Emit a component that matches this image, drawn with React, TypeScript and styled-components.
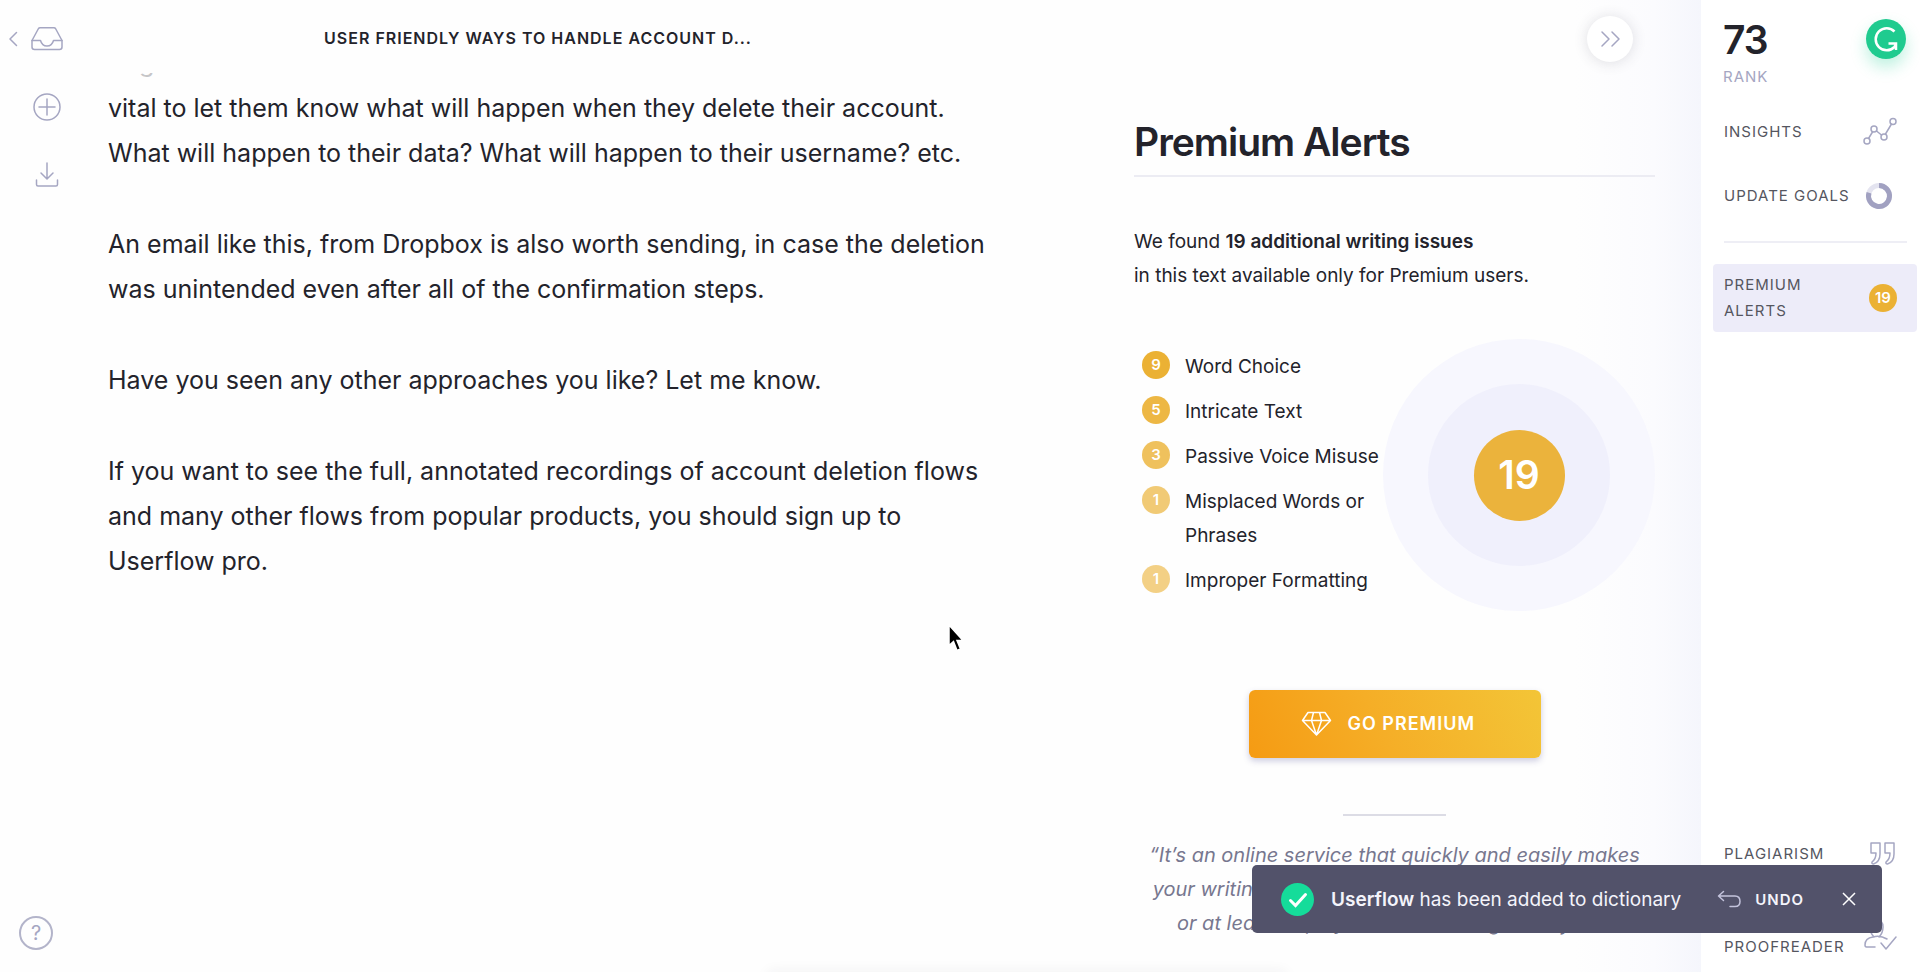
import React from "react";
import styled, { createGlobalStyle } from "styled-components";

const ink = "#23232b";
const slate = "#55565f";
const muted = "#a5a6c2";
const amber = "#ebb33c";

const GlobalStyle = createGlobalStyle`
  *, *::before, *::after { box-sizing: border-box; }
  body {
    margin: 0;
    background: #fefefe;
    color: ${ink};
    font-family: Inter, "Liberation Sans", sans-serif;
  }
  h1, h2, p, ul { margin: 0; padding: 0; }
  ul { list-style: none; }
  strong { font-weight: 600; }
  button { border: 0; padding: 0; background: none; color: inherit; font: inherit; cursor: pointer; }
  a { color: inherit; text-decoration: none; }
  svg { display: block; flex: none; }
`;

const Page = styled.div`
  display: grid;
  grid-template-columns: 94px minmax(0, 1fr) 587px 219px;
  height: 100vh;
  overflow: hidden;
`;

const Rail = styled.nav`
  display: flex;
  flex-direction: column;
  align-items: flex-start;
  justify-content: space-between;
  padding: 22px 0 22px 8px;
`;

const RailGroup = styled.div`
  display: flex;
  flex-direction: column;
  align-items: flex-end;
  gap: 34px;
`;

const RailLink = styled.a`
  display: flex;
  align-items: center;
  gap: 12px;
`;

const IconButton = styled.button`
  display: flex;
  align-items: center;
  justify-content: center;
  width: 34px;
  height: 34px;
`;

const HelpButton = styled.button`
  width: 34px;
  height: 34px;
  margin-left: 11px;
  border: 2px solid #b3b4ca;
  border-radius: 50%;
  color: ${muted};
  font-size: 20px;
  line-height: 30px;
`;

const Editor = styled.main`
  max-width: 888px;
`;

const TopBar = styled.header`
  display: flex;
  align-items: center;
  justify-content: center;
  height: 73px;
  padding-top: 3px;
`;

const DocTitle = styled.h1`
  font-size: 16px;
  line-height: 24px;
  font-weight: 600;
  letter-spacing: 1px;
  text-transform: uppercase;
`;

/* The last line scrolled under the top bar: only its descenders show. */
const ScrolledLine = styled.div`
  display: flex;
  align-items: flex-end;
  height: 5px;
  padding-left: 45px;
  overflow: hidden;
  font-size: 25px;
  line-height: 30px;
  opacity: 0.25;
`;

const Article = styled.article`
  display: flex;
  flex-direction: column;
  gap: 46px;
  padding: 8px 0 0 14px;
  font-size: 25px;
  line-height: 45px;
  white-space: nowrap;
`;

const Panel = styled.section`
  background: linear-gradient(to right, rgba(246, 247, 253, 0) 460px, #fbfbfe 540px, #f5f6fc 100%);
`;

const PanelBar = styled.div`
  display: flex;
  align-items: center;
  justify-content: flex-end;
  height: 78px;
  padding-right: 68px;
`;

const CollapseButton = styled(IconButton)`
  width: 46px;
  height: 46px;
  border-radius: 50%;
  background: #fff;
  box-shadow: 0 1px 14px rgba(60, 60, 80, 0.16);
`;

const PanelBody = styled.div`
  display: flex;
  flex-direction: column;
  padding: 36px 46px 0 20px;
  font-size: 19px;
  line-height: 34px;
`;

const PanelTitle = styled.h2`
  padding-bottom: 6px;
  border-bottom: 2px solid #ececf3;
  font-size: 39px;
  line-height: 55px;
  font-weight: 600;
  letter-spacing: -1px;
`;

const Summary = styled.p`
  margin-top: 48px;
`;

const Breakdown = styled.div`
  display: flex;
  justify-content: space-between;
  margin-top: 46px;
`;

const IssueList = styled.ul`
  display: flex;
  flex-direction: column;
  gap: 11px;
  padding: 11px 0 0 8px;
  white-space: nowrap;
`;

const Issue = styled.li`
  display: flex;
  gap: 15px;
`;

const Count = styled.span<{ $strength?: number }>`
  flex: none;
  width: 28px;
  height: 28px;
  border-radius: 50%;
  background: rgba(235, 177, 52, ${(p) => p.$strength ?? 1});
  color: #fff;
  font-size: 15px;
  line-height: 28px;
  font-weight: 600;
  text-align: center;
  letter-spacing: 0;
`;

const IssueCount = styled(Count)`
  margin-top: 1px;
`;

const Ring = styled.div<{ $size: number; $fill: string }>`
  display: flex;
  flex: none;
  align-items: center;
  justify-content: center;
  width: ${(p) => p.$size}px;
  height: ${(p) => p.$size}px;
  border-radius: 50%;
  background: ${(p) => p.$fill};
  color: #fff;
  font-size: 39px;
  font-weight: 600;
`;

const PremiumButton = styled.button`
  display: flex;
  align-items: center;
  align-self: center;
  gap: 16px;
  width: 292px;
  height: 68px;
  margin-top: 79px;
  padding-left: 52px;
  border-radius: 6px;
  background: linear-gradient(65deg, #f59b13 0%, #f5ae27 45%, #f3c537 100%);
  box-shadow: 0 3px 6px rgba(60, 60, 140, 0.25);
  color: #fff;
  font-size: 18px;
  font-weight: 600;
  letter-spacing: 1px;
`;

const ShortRule = styled.hr`
  width: 103px;
  margin: 56px auto 0;
  border: 0;
  border-top: 2px solid #dcdce5;
`;

const Quote = styled.p`
  margin-top: 22px;
  color: #77778f;
  font-size: 20px;
  font-style: italic;
  text-align: center;
  white-space: nowrap;
`;

const Sidebar = styled.aside`
  display: flex;
  flex-direction: column;
  padding: 19px 3px 0 12px;
  background: #fff;
`;

const ScoreRow = styled.div`
  display: flex;
  justify-content: space-between;
  padding: 0 11px 0 10px;
`;

const Score = styled.div`
  font-size: 39px;
  line-height: 41px;
  font-weight: 600;
  letter-spacing: -1px;
`;

const ScoreLabel = styled.div`
  color: ${muted};
  font-size: 15px;
  line-height: 34px;
  letter-spacing: 1px;
`;

const Logo = styled.a`
  width: 40px;
  height: 40px;
  border-radius: 50%;
  box-shadow: 0 8px 16px rgba(21, 205, 145, 0.28);
`;

const SideLink = styled.a<{ $active?: boolean }>`
  display: flex;
  align-items: center;
  justify-content: space-between;
  min-height: ${(p) => (p.$active ? 68 : 64)}px;
  padding: 0 20px 0 11px;
  border-radius: 4px;
  background: ${(p) => (p.$active ? "#edecf9" : "transparent")};
  color: ${slate};
  font-size: 15px;
  line-height: 26px;
  letter-spacing: 1px;
  white-space: nowrap;
`;

const TopLinks = styled.nav`
  padding-top: 6px;
`;

const Divider = styled.hr`
  width: calc(100% - 21px);
  margin: 13px 10px 21px 11px;
  border: 0;
  border-top: 2px solid #eeeef5;
`;

const BottomLinks = styled.nav`
  display: flex;
  flex-direction: column;
  gap: 16px;
  margin-top: auto;
  padding-bottom: 6px;
`;

const Proofreader = styled.span`
  padding-top: 26px;
`;

const Toast = styled.div`
  position: fixed;
  right: 38px;
  bottom: 39px;
  display: flex;
  align-items: center;
  width: 630px;
  height: 68px;
  padding: 0 24px 0 29px;
  border-radius: 5px;
  background: #52526a;
  color: #f4f4fb;
  font-size: 19px;
  white-space: nowrap;
`;

const ToastText = styled.span`
  flex: 1;
  margin-left: 17px;
`;

const UndoButton = styled.button`
  display: flex;
  align-items: center;
  gap: 14px;
  margin-right: 36px;
  font-size: 15px;
  font-weight: 600;
  letter-spacing: 1px;
`;

const HiddenBarShadow = styled.div`
  position: fixed;
  left: 40%;
  right: 33%;
  bottom: -10px;
  height: 10px;
  box-shadow: 0 0 14px rgba(40, 40, 60, 0.07);
`;

const Pointer = styled.svg`
  position: fixed;
  left: 947px;
  top: 623px;
`;

const line = { fill: "none", stroke: muted, strokeWidth: 1.5, strokeLinejoin: "round", strokeLinecap: "round" } as const;

const issues = [
  { count: 9, strength: 1, label: "Word Choice" },
  { count: 5, strength: 0.92, label: "Intricate Text" },
  { count: 3, strength: 0.8, label: "Passive Voice Misuse" },
  { count: 1, strength: 0.68, label: <>Misplaced Words or<br />Phrases</> },
  { count: 1, strength: 0.6, label: "Improper Formatting" },
];

export default function App() {
  return (
    <>
      <GlobalStyle />
      <Page>
        <Rail>
          <RailGroup>
            <RailLink href="#documents" aria-label="Back to documents">
              <svg width="10" height="16" {...line}><path d="M8.500 1.500 L2 8 L8.500 14.500" /></svg>
              <svg width="34" height="34" {...line}>
                <path d="M2 18.500 L8.500 6.500 Q9 5.800 10 5.800 H24 Q25 5.800 25.500 6.500 L32 18.500 V25 Q32 27.500 29.500 27.500 H4.500 Q2 27.500 2 25 Z" />
                <path d="M2 18.500 H10.500 Q12 24 17 24 Q22 24 23.500 18.500 H32" />
              </svg>
            </RailLink>
            <IconButton aria-label="New document">
              <svg width="30" height="30" {...line}><circle cx="15" cy="15" r="13" /><path d="M15 7 V23 M7 15 H23" /></svg>
            </IconButton>
            <IconButton aria-label="Download">
              <svg width="24" height="28" {...line}><path d="M12 2 V17.500 M6 12 L12 18 L18 12 M1.500 19 V23.500 Q1.500 25 3 25 H21 Q22.500 25 22.500 23.500 V19" /></svg>
            </IconButton>
          </RailGroup>
          <HelpButton aria-label="Help">?</HelpButton>
        </Rail>

        <Editor>
          <TopBar>
            <DocTitle>User friendly ways to handle account d...</DocTitle>
          </TopBar>
          <ScrolledLine>g</ScrolledLine>
          <Article>
            <p>
              vital to let them know what will happen when they delete their account.<br />
              What will happen to their data? What will happen to their username? etc.
            </p>
            <p>
              An email like this, from Dropbox is also worth sending, in case the deletion<br />
              was unintended even after all of the confirmation steps.
            </p>
            <p>Have you seen any other approaches you like? Let me know.</p>
            <p>
              If you want to see the full, annotated recordings of account deletion flows<br />
              and many other flows from popular products, you should sign up to<br />
              Userflow pro.
            </p>
          </Article>
        </Editor>

        <Panel>
          <PanelBar>
            <CollapseButton aria-label="Collapse panel">
              <svg width="22" height="18" {...line}><path d="M3 2 L10 9 L3 16 M13 2 L20 9 L13 16" /></svg>
            </CollapseButton>
          </PanelBar>
          <PanelBody>
            <PanelTitle>Premium Alerts</PanelTitle>
            <Summary>
              We found <strong>19 additional writing issues</strong><br />
              in this text available only for Premium users.
            </Summary>
            <Breakdown>
              <IssueList>
                {issues.map((issue, i) => (
                  <Issue key={i}>
                    <IssueCount $strength={issue.strength}>{issue.count}</IssueCount>
                    <span>{issue.label}</span>
                  </Issue>
                ))}
              </IssueList>
              <Ring $size={272} $fill="#f7f7fe">
                <Ring $size={182} $fill="#f0f0fc">
                  <Ring $size={91} $fill={amber}>19</Ring>
                </Ring>
              </Ring>
            </Breakdown>
            <PremiumButton>
              <svg width="31" height="26" fill="none" stroke="#fff" strokeWidth="1.5" strokeLinejoin="round">
                <path d="M7 1.500 H24 L29.500 9.500 L15.500 24 L1.500 9.500 Z M1.500 9.500 H29.500 M12.500 1.500 L10.500 9.500 L15.500 24 L20.500 9.500 L18.500 1.500" />
              </svg>
              GO PREMIUM
            </PremiumButton>
            <ShortRule />
            <Quote>
              “It’s an online service that quickly and easily makes<br />
              your writing sound like you’re a professional writer,<br />
              or at least helps you avoid looking like a fool.”
            </Quote>
          </PanelBody>
        </Panel>

        <Sidebar>
          <ScoreRow>
            <div>
              <Score>73</Score>
              <ScoreLabel>RANK</ScoreLabel>
            </div>
            <Logo href="#home" aria-label="Home">
              <svg width="40" height="40" fill="none">
                <circle cx="20" cy="20" r="20" fill="#1fcb8f" />
                <path d="M28.500 12.500 A11 11 0 1 0 28.500 28 L30 24.500" stroke="#fff" strokeWidth="2.500" />
                <path d="M22.500 24.500 H30 V31" stroke="#fff" strokeWidth="2.500" />
              </svg>
            </Logo>
          </ScoreRow>
          <TopLinks>
            <SideLink href="#insights">
              INSIGHTS
              <svg width="34" height="30" {...line}>
                <path d="M5.500 21.500 L9.500 15 M13.500 14 L18.500 18 M22.500 17 L28.500 7" />
                <circle cx="4" cy="24" r="3" /><circle cx="11" cy="12" r="3" />
                <circle cx="21" cy="20" r="3" /><circle cx="30" cy="4.500" r="3" />
              </svg>
            </SideLink>
            <SideLink href="#goals">
              UPDATE GOALS
              <svg width="34" height="28" fill="none">
                <circle cx="16" cy="14" r="10.500" stroke="#e4e4f0" strokeWidth="5" />
                <path d="M16 3.500 A10.500 10.500 0 1 1 6 10.800" stroke="#a1a1c1" strokeWidth="5" />
              </svg>
            </SideLink>
          </TopLinks>
          <Divider />
          <SideLink href="#alerts" $active>
            <span>PREMIUM<br />ALERTS</span>
            <Count>19</Count>
          </SideLink>
          <BottomLinks>
            <SideLink href="#plagiarism">
              PLAGIARISM
              <svg width="28" height="26" {...line}>
                <path d="M2 2 H11 V13 Q11 21 4.500 23 Q2.500 23 3 21 Q7 18 7 12 H2 Z M16 2 H25 V13 Q25 21 18.500 23 Q16.500 23 17 21 Q21 18 21 12 H16 Z" />
              </svg>
            </SideLink>
            <SideLink href="#proofreader">
              <Proofreader>PROOFREADER</Proofreader>
              <svg width="34" height="34" {...line}>
                <path d="M11 20 Q7 16 7 10 Q7 3 13.500 3 Q20 3 20 10 Q20 16 16 20 M12 30 H3.500 Q2 30 2 28 Q2 21 10 20 Q17 18 24 22 M18 26 L23 32 L33 20" />
              </svg>
            </SideLink>
          </BottomLinks>
        </Sidebar>
      </Page>

      <HiddenBarShadow />

      <Toast role="status">
        <svg width="33" height="33" fill="none">
          <circle cx="16.500" cy="16.500" r="16.500" fill="#15dc9a" />
          <path d="M9.500 17.500 L14.500 22.500 L24.500 11.500" stroke="#fff" strokeWidth="3" strokeLinecap="round" />
        </svg>
        <ToastText><strong>Userflow</strong> has been added to dictionary</ToastText>
        <UndoButton>
          <svg width="24" height="18" fill="none" stroke="#c3c3dc" strokeWidth="1.500" strokeLinecap="round" strokeLinejoin="round">
            <path d="M6.500 1.500 L1.500 6 L6.500 10.500 M1.500 6 H18 Q23 6 23 11.500 Q23 16.500 18 16.500 H13" />
          </svg>
          UNDO
        </UndoButton>
        <button aria-label="Dismiss">
          <svg width="18" height="18" fill="none" stroke="#fff" strokeWidth="1.500"><path d="M3 3 L15 15 M15 3 L3 15" /></svg>
        </button>
      </Toast>

      <Pointer width="20" height="32" aria-hidden="true">
        <path d="M2 2 V22.500 L6.500 18.500 L10 27.500 L13.500 26 L10 17.500 H16 Z" fill="#000" stroke="#fff" strokeWidth="1.500" />
      </Pointer>
    </>
  );
}
